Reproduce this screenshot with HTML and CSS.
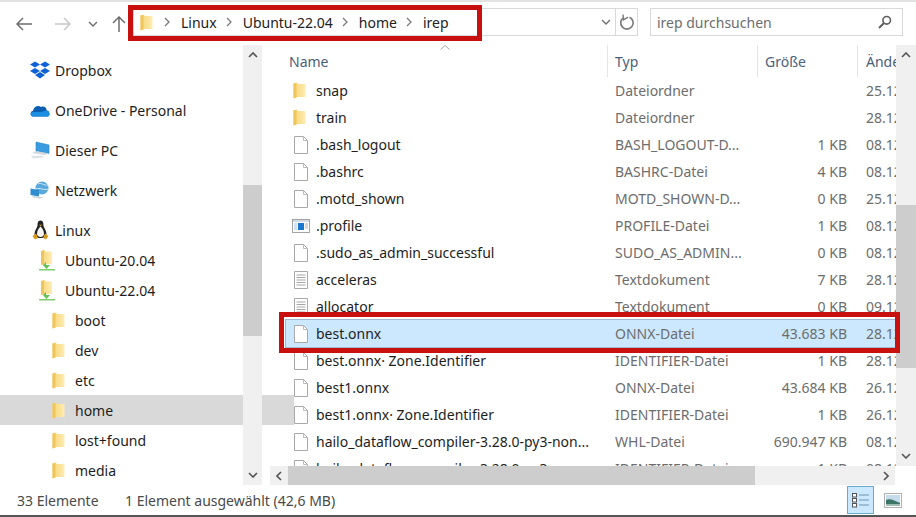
FILE: index.html
```html
<!DOCTYPE html>
<html>
	<head>
		<meta name="viewport" content="width=device-width, initial-scale=1" />
		<title>irep</title>
		<link rel="stylesheet" href="styles.css">
	</head>
	<body>
		<svg class="defs" width="0" height="0">
			<defs>
				<linearGradient id="folderFill" x1="0" y1="0" x2="1" y2="0">
					<stop offset="0" stop-color="#f8d67c" />
					<stop offset="0.6" stop-color="#fbe296" />
					<stop offset="1" stop-color="#fdedb9" />
				</linearGradient>
				<symbol id="folder" viewBox="0 0 14 17">
					<path d="M0.5 1.5 L4.5 0.5 L4.5 2 L12.5 2 L12.5 15 L4.5 15 L0.5 16.5 Z" fill="url(#folderFill)" />
					<path d="M0.5 1.5 L3.5 0.7 L3.5 15.4 L0.5 16.5 Z" fill="#efc65c" />
				</symbol>
				<symbol id="file" viewBox="0 0 16 20">
					<path d="M1.5 1.5 H10.5 L14.5 5.5 V18.5 H1.5 Z" fill="#fff" stroke="#a9a9a9" />
					<path d="M10.5 1.5 V5.5 H14.5" fill="none" stroke="#bdbdbd" />
				</symbol>
				<symbol id="textfile" viewBox="0 0 16 20">
					<path d="M1.5 1.5 H14.5 V18.5 H1.5 Z" fill="#fff" stroke="#a9a9a9" />
					<path d="M3.5 5 H12.5 M3.5 7.5 H12.5 M3.5 10 H12.5 M3.5 12.5 H12.5 M3.5 15 H12.5" stroke="#a5a5a5" />
				</symbol>
				<symbol id="profile" viewBox="0 0 18 14">
					<rect x="0.5" y="0.5" width="17" height="13" fill="#fff" stroke="#a4a4a4" />
					<rect x="1" y="1" width="16" height="2" fill="#cfd8e3" />
					<rect x="2" y="4" width="3" height="7" fill="#cfe2f5" />
					<rect x="6" y="4" width="6" height="7" fill="#1b76cf" />
					<path d="M13 5 H16 M13 7 H16 M13 9 H16" stroke="#b0b0b0" />
				</symbol>
				<symbol id="wslfolder" viewBox="0 0 18 22">
					<path d="M3 2 L7 1 L7 2.5 L14 2.5 L14 15 L7 15 L3 16 Z" fill="url(#folderFill)" />
					<path d="M3 2 L6 1.2 L6 15.3 L3 16 Z" fill="#efc65c" />
					<path d="M8 13 V16 H12 L8.5 20 L5 16 Z" fill="#62c04e" />
					<path d="M1 20 H17 V21.5 H1 Z" fill="#7fce6b" />
				</symbol>
			</defs>
		</svg>

		<div class="window">
			<header class="toolbar">
				<button class="navButton">
					<svg width="16" height="14" viewBox="0 0 16 14"><path d="M7 1 L1 7 L7 13 M1 7 H16" fill="none" stroke="#6e6e6e" stroke-width="1.5" /></svg>
				</button>
				<button class="navButton navForward">
					<svg width="16" height="14" viewBox="0 0 16 14"><path d="M9 1 L15 7 L9 13 M0 7 H15" fill="none" stroke="#c8c8c8" stroke-width="1.5" /></svg>
				</button>
				<button class="navButton navRecent">
					<svg width="10" height="6" viewBox="0 0 10 6"><path d="M1 1 L5 5 L9 1" fill="none" stroke="#6e6e6e" stroke-width="1.4" /></svg>
				</button>
				<button class="navButton navUp">
					<svg width="14" height="16" viewBox="0 0 14 16"><path d="M1 7 L7 1 L13 7 M7 1 V16" fill="none" stroke="#6e6e6e" stroke-width="1.5" /></svg>
				</button>

				<div class="addressBar">
					<svg class="addressFolder" width="14" height="17"><use href="#folder" /></svg>
					<div class="crumbs">
						<svg class="crumbArrow" width="6" height="10" viewBox="0 0 6 10"><path d="M1 1 L5 5 L1 9" fill="none" stroke="#7a7a7a" stroke-width="1.3" /></svg>
						<span>Linux</span>
						<svg class="crumbArrow" width="6" height="10" viewBox="0 0 6 10"><path d="M1 1 L5 5 L1 9" fill="none" stroke="#7a7a7a" stroke-width="1.3" /></svg>
						<span>Ubuntu-22.04</span>
						<svg class="crumbArrow" width="6" height="10" viewBox="0 0 6 10"><path d="M1 1 L5 5 L1 9" fill="none" stroke="#7a7a7a" stroke-width="1.3" /></svg>
						<span>home</span>
						<svg class="crumbArrow" width="6" height="10" viewBox="0 0 6 10"><path d="M1 1 L5 5 L1 9" fill="none" stroke="#7a7a7a" stroke-width="1.3" /></svg>
						<span>irep</span>
					</div>
					<div class="addressDrop">
						<svg width="10" height="6" viewBox="0 0 10 6"><path d="M1 1 L5 5 L9 1" fill="none" stroke="#6e6e6e" stroke-width="1.4" /></svg>
					</div>
					<div class="addressRefresh">
						<svg width="16" height="17" viewBox="0 0 16 17"><path d="M10.5 3.2 A6.2 6.2 0 1 1 5 3.4" fill="none" stroke="#7d7d7d" stroke-width="1.7" /><path d="M4 0.5 L4.6 5.8 L9 3.2" fill="none" stroke="#7d7d7d" stroke-width="1.4" /></svg>
					</div>
				</div>

				<div class="searchBox">
					<span>irep durchsuchen</span>
					<svg width="14" height="14" viewBox="0 0 14 14"><circle cx="8.7" cy="5.3" r="3.8" fill="none" stroke="#5f5f5f" stroke-width="1.6" /><path d="M6 8 L1 13" stroke="#5f5f5f" stroke-width="2" /></svg>
				</div>
			</header>

			<main class="content">
				<nav class="tree">
					<div class="treeList">
						<div class="treeItem treeTop">
							<svg class="treeIcon" width="20" height="18" viewBox="0 0 20 18"><path d="M5 0.5 L10 3.5 L5 6.5 L0 3.5 Z M15 0.5 L20 3.5 L15 6.5 L10 3.5 Z M5 7 L10 10 L5 13 L0 10 Z M15 7 L20 10 L15 13 L10 10 Z M10 11 L15 14 L10 17.5 L5 14 Z" fill="#0f62d6" /></svg>
							<span>Dropbox</span>
						</div>
						<div class="treeItem treeTop">
							<svg class="treeIcon" width="20" height="14" viewBox="0 0 20 14"><path d="M3.5 13.5 C0 13.5 -0.5 8.5 3 7.8 C3.8 3.5 8 1.5 11 4 C14 2.5 17 5 16.5 7.5 C20 7.5 20.8 13.5 17 13.5 Z" fill="#0c5fb0" /><path d="M3.5 13.5 C0 13.5 -0.5 9.5 3 9 L11 9 L16.5 7.5 C20 7.5 20.8 13.5 17 13.5 Z" fill="#1c8fe3" /></svg>
							<span>OneDrive - Personal</span>
						</div>
						<div class="treeItem treeTop">
							<svg class="treeIcon" width="20" height="18" viewBox="0 0 20 18"><path d="M6 1 L19 4 V12.5 L6 10 Z" fill="#3a9ce0" stroke="#2a7fc0" stroke-width="0.6" /><path d="M6 10 L19 12.5 L15 14 L2 12 Z" fill="#cfd6dc" /><path d="M1 15 L12 14.5 L14 16.5 L3 17.5 Z" fill="#dfe3e6" /></svg>
							<span>Dieser PC</span>
						</div>
						<div class="treeItem treeTop">
							<svg class="treeIcon" width="20" height="18" viewBox="0 0 20 18"><circle cx="12" cy="7" r="6.5" fill="#58a9dd" /><path d="M8 3 C11 1 14 5 18 4 M6 8 C10 6 14 10 18 8" fill="none" stroke="#cfe9f8" stroke-width="1" /><path d="M0.5 7.5 L9 9 V15.5 L0.5 14 Z" fill="#2f8dd0" /><path d="M4 15 L14 16.5 L10 17.5 L1 16 Z" fill="#c9d2d8" /></svg>
							<span>Netzwerk</span>
						</div>
						<div class="treeItem treeTop treeLinux">
							<svg class="treeIcon treeTux" width="17" height="20" viewBox="0 0 17 20"><path d="M8.5 0.5 C5.5 0.5 5.5 4 5.5 6 C5 8 2.5 10.5 2.5 14 C2.5 16 5 18 8.5 18 C12 18 14.5 16 14.5 14 C14.5 10.5 12 8 11.5 6 C11.5 4 11.5 0.5 8.5 0.5 Z" fill="#222" /><path d="M8.5 6.5 C6.5 8 5 11 5 14 C5 16 7 17 8.5 17 C10 17 12 16 12 14 C12 11 10.5 8 8.5 6.5 Z" fill="#f5f5f5" /><path d="M7 4.7 H10 L8.5 6.2 Z" fill="#e0a526" /><path d="M0.5 16 L4 13.5 L6 18 L3 19.5 Z M16.5 16 L13 13.5 L11 18 L14 19.5 Z" fill="#d99a1c" /></svg>
							<span>Linux</span>
						</div>
						<div class="treeItem treeDistro">
							<svg class="treeIcon" width="18" height="22"><use href="#wslfolder" /></svg>
							<span>Ubuntu-20.04</span>
						</div>
						<div class="treeItem treeDistro">
							<svg class="treeIcon" width="18" height="22"><use href="#wslfolder" /></svg>
							<span>Ubuntu-22.04</span>
						</div>
						<div class="treeItem treeDir">
							<svg class="treeIcon" width="14" height="17"><use href="#folder" /></svg>
							<span>boot</span>
						</div>
						<div class="treeItem treeDir">
							<svg class="treeIcon" width="14" height="17"><use href="#folder" /></svg>
							<span>dev</span>
						</div>
						<div class="treeItem treeDir">
							<svg class="treeIcon" width="14" height="17"><use href="#folder" /></svg>
							<span>etc</span>
						</div>
						<div class="treeItem treeDir treeSelected">
							<svg class="treeIcon" width="14" height="17"><use href="#folder" /></svg>
							<span>home</span>
						</div>
						<div class="treeItem treeDir">
							<svg class="treeIcon" width="14" height="17"><use href="#folder" /></svg>
							<span>lost+found</span>
						</div>
						<div class="treeItem treeDir">
							<svg class="treeIcon" width="14" height="17"><use href="#folder" /></svg>
							<span>media</span>
						</div>
					</div>
					<div class="scrollV treeScroll">
						<svg class="scrollEnd" width="10" height="6" viewBox="0 0 10 6"><path d="M1 5 L5 1 L9 5" fill="none" stroke="#555" stroke-width="1.6" /></svg>
						<div class="scrollTrack"><div class="scrollThumb"></div></div>
						<svg class="scrollEnd" width="10" height="6" viewBox="0 0 10 6"><path d="M1 1 L5 5 L9 1" fill="none" stroke="#555" stroke-width="1.6" /></svg>
					</div>
				</nav>

				<section class="files">
					<div class="filesMain">
						<div class="filesView">
							<div class="columnHeads">
								<div class="head headName">Name
									<svg class="sortCaret" width="10" height="5" viewBox="0 0 10 5"><path d="M0.5 4.5 L5 0.5 L9.5 4.5" fill="none" stroke="#a8a8a8" /></svg>
								</div>
								<div class="head">Typ</div>
								<div class="head">Größe</div>
								<div class="head headDate">Änderungsdatum</div>
							</div>
							<div class="rows">
								<div class="row"><svg class="rowIcon" width="14" height="17"><use href="#folder" /></svg><span class="name">snap</span><span class="type">Dateiordner</span><span class="size"></span><span class="date">25.12.</span></div>
								<div class="row"><svg class="rowIcon" width="14" height="17"><use href="#folder" /></svg><span class="name">train</span><span class="type">Dateiordner</span><span class="size"></span><span class="date">28.12.</span></div>
								<div class="row"><svg class="rowIcon" width="16" height="20"><use href="#file" /></svg><span class="name">.bash_logout</span><span class="type">BASH_LOGOUT-D...</span><span class="size">1 KB</span><span class="date">08.12.</span></div>
								<div class="row"><svg class="rowIcon" width="16" height="20"><use href="#file" /></svg><span class="name">.bashrc</span><span class="type">BASHRC-Datei</span><span class="size">4 KB</span><span class="date">08.12.</span></div>
								<div class="row"><svg class="rowIcon" width="16" height="20"><use href="#file" /></svg><span class="name">.motd_shown</span><span class="type">MOTD_SHOWN-D...</span><span class="size">0 KB</span><span class="date">25.12.</span></div>
								<div class="row"><svg class="rowIcon rowIconWide" width="18" height="14"><use href="#profile" /></svg><span class="name">.profile</span><span class="type">PROFILE-Datei</span><span class="size">1 KB</span><span class="date">08.12.</span></div>
								<div class="row"><svg class="rowIcon" width="16" height="20"><use href="#file" /></svg><span class="name">.sudo_as_admin_successful</span><span class="type">SUDO_AS_ADMIN...</span><span class="size">0 KB</span><span class="date">08.12.</span></div>
								<div class="row"><svg class="rowIcon" width="16" height="20"><use href="#textfile" /></svg><span class="name">acceleras</span><span class="type">Textdokument</span><span class="size">7 KB</span><span class="date">28.12.</span></div>
								<div class="row"><svg class="rowIcon" width="16" height="20"><use href="#textfile" /></svg><span class="name">allocator</span><span class="type">Textdokument</span><span class="size">0 KB</span><span class="date">09.12.</span></div>
								<div class="row rowSelected"><svg class="rowIcon" width="16" height="20"><use href="#file" /></svg><span class="name">best.onnx</span><span class="type">ONNX-Datei</span><span class="size">43.683 KB</span><span class="date">28.12.</span></div>
								<div class="row"><svg class="rowIcon" width="16" height="20"><use href="#file" /></svg><span class="name">best.onnx· Zone.Identifier</span><span class="type">IDENTIFIER-Datei</span><span class="size">1 KB</span><span class="date">28.12.</span></div>
								<div class="row"><svg class="rowIcon" width="16" height="20"><use href="#file" /></svg><span class="name">best1.onnx</span><span class="type">ONNX-Datei</span><span class="size">43.684 KB</span><span class="date">26.12.</span></div>
								<div class="row"><svg class="rowIcon" width="16" height="20"><use href="#file" /></svg><span class="name">best1.onnx· Zone.Identifier</span><span class="type">IDENTIFIER-Datei</span><span class="size">1 KB</span><span class="date">26.12.</span></div>
								<div class="row"><svg class="rowIcon" width="16" height="20"><use href="#file" /></svg><span class="name">hailo_dataflow_compiler-3.28.0-py3-non...</span><span class="type">WHL-Datei</span><span class="size">690.947 KB</span><span class="date">08.12.</span></div>
								<div class="row"><svg class="rowIcon" width="16" height="20"><use href="#file" /></svg><span class="name">hailo_dataflow_compiler-3.28.0-py3...</span><span class="type">IDENTIFIER-Datei</span><span class="size">1 KB</span><span class="date">08.12.</span></div>
							</div>
						</div>
						<div class="scrollV filesScroll">
							<svg class="scrollEnd" width="10" height="6" viewBox="0 0 10 6"><path d="M1 5 L5 1 L9 5" fill="none" stroke="#555" stroke-width="1.6" /></svg>
							<div class="scrollTrack"><div class="scrollThumb"></div></div>
							<svg class="scrollEnd" width="10" height="6" viewBox="0 0 10 6"><path d="M1 1 L5 5 L9 1" fill="none" stroke="#555" stroke-width="1.6" /></svg>
						</div>
					</div>
					<div class="scrollH">
						<svg class="scrollEnd" width="6" height="10" viewBox="0 0 6 10"><path d="M5 1 L1 5 L5 9" fill="none" stroke="#555" stroke-width="1.6" /></svg>
						<div class="scrollTrackH"><div class="scrollThumbH"></div></div>
						<svg class="scrollEnd" width="6" height="10" viewBox="0 0 6 10"><path d="M1 1 L5 5 L1 9" fill="none" stroke="#555" stroke-width="1.6" /></svg>
					</div>
				</section>
			</main>

			<footer class="statusBar">
				<span class="statusCount">33 Elemente</span>
				<span class="statusSelected">1 Element ausgewählt (42,6 MB)</span>
				<div class="viewButtons">
					<div class="viewButton viewActive">
						<svg width="17" height="17" viewBox="0 0 17 17"><rect x="0.5" y="1.5" width="4" height="3.5" fill="#fff" stroke="#555" /><rect x="0.5" y="6.5" width="4" height="3.5" fill="#fff" stroke="#555" /><rect x="0.5" y="11.5" width="4" height="3.5" fill="#fff" stroke="#555" /><path d="M7 3 H17 M7 8 H17 M7 13 H17" stroke="#6f93ad" /></svg>
					</div>
					<div class="viewButton">
						<svg width="18" height="15" viewBox="0 0 18 15"><rect x="0.5" y="0.5" width="17" height="14" fill="#fff" stroke="#b0b0b0" /><rect x="2" y="2" width="14" height="11" fill="#c6dcec" /><path d="M2 7 C6 5 11 8 16 10 V13 H2 Z" fill="#3a7565" /><rect x="2" y="11" width="14" height="2" fill="#9dbbb1" /></svg>
					</div>
				</div>
			</footer>

			<div class="marker markerAddress"></div>
			<div class="marker markerRow"></div>
		</div>
	</body>
</html>
```

FILE: styles.css
```css
html {
	font-family: "Noto Sans", Arial, sans-serif;
	font-size: 14px;
}
body {
	margin: 0px;
	background: white;
	color: #1e1e1e;
}
.defs {
	position: absolute;
}
.window {
	position: relative;
	width: 916px;
	height: 517px;
	display: flex;
	flex-direction: column;
	overflow: hidden;
	border-top: 2px solid #e3e3e3;
	box-sizing: border-box;
}

/* top bar */
.toolbar {
	height: 43px;
	flex: none;
	display: flex;
	align-items: center;
}
.navButton {
	border: none;
	background: none;
	padding: 0px;
	display: flex;
	align-items: center;
	justify-content: center;
	margin-left: 16px;
	width: 16px;
}
.navForward {
	margin-left: 23px;
}
.navRecent {
	margin-left: 17px;
	width: 10px;
}
.navUp {
	margin-left: 14px;
	width: 14px;
}
.addressBar {
	margin-left: 7px;
	width: 505px;
	height: 28px;
	display: flex;
	align-items: center;
	box-sizing: border-box;
	border: 1px solid #d9d9d9;
	margin-top: -3px;
}
.addressFolder {
	margin-left: 6px;
	flex: none;
}
.crumbs {
	display: flex;
	align-items: center;
	flex: 1;
	margin-left: 10px;
}
.crumbs span {
	margin: 0px 9px 0px 11px;
	color: #222;
}
.addressDrop {
	width: 20px;
	height: 100%;
	display: flex;
	align-items: center;
	justify-content: center;
	border-right: 1px solid #d9d9d9;
	box-sizing: border-box;
}
.addressRefresh {
	width: 21px;
	display: flex;
	justify-content: center;
}
.searchBox {
	margin-left: 12px;
	margin-top: -3px;
	width: 253px;
	height: 28px;
	box-sizing: border-box;
	border: 1px solid #d9d9d9;
	display: flex;
	align-items: center;
	justify-content: space-between;
	padding: 0px 10px 0px 6px;
	color: #6d6d6d;
}

/* middle */
.content {
	height: 440px;
	flex: none;
	display: flex;
}
.tree {
	width: 270px;
	flex: none;
	display: flex;
}
.treeList {
	width: 243px;
	flex: none;
	padding-top: 5px;
}
.treeItem {
	display: flex;
	align-items: center;
	height: 30px;
}
.treeTop {
	height: 40px;
	padding-left: 30px;
}
.treeLinux {
	height: 30px;
	margin-top: 5px;
}
.treeDistro {
	padding-left: 38px;
}
.treeDir {
	padding-left: 52px;
}
.treeIcon {
	flex: none;
	margin-right: 5px;
}
.treeTux {
	margin-left: 2px;
	margin-right: 6px;
}
.treeDistro .treeIcon {
	margin-right: 9px;
}
.treeDir .treeIcon {
	margin-right: 9px;
}
.treeSelected {
	background: #d9d9d9;
	width: 242px;
}
.scrollV {
	width: 19px;
	flex: none;
	background: #f0f0f0;
	display: flex;
	flex-direction: column;
	align-items: center;
}
.scrollEnd {
	flex: none;
	margin: 7px 0px;
}
.scrollTrack {
	flex: 1;
	width: 100%;
}
.scrollThumb {
	background: #cdcdcd;
}
.treeScroll .scrollThumb {
	margin-top: 120px;
	height: 151px;
}
.filesScroll {
	width: 20px;
}
.filesScroll .scrollThumb {
	margin-top: 140px;
	height: 163px;
}
.files {
	width: 646px;
	display: flex;
	flex-direction: column;
}
.filesMain {
	display: flex;
	height: 421px;
}
.filesView {
	width: 626px;
	flex: none;
	overflow: hidden;
}
.columnHeads {
	display: grid;
	grid-template-columns: 337px 150px 100px 39px;
	height: 32px;
	color: #4c607a;
}
.head {
	position: relative;
	padding-left: 7px;
	border-left: 1px solid #e5e5e5;
	line-height: 34px;
	box-sizing: border-box;
	white-space: nowrap;
	overflow: hidden;
}
.headName {
	border-left: none;
	padding-left: 19px;
}
.headDate {
	padding-left: 8px;
}
.sortCaret {
	position: absolute;
	left: 170px;
	top: 0px;
}
.rows {
	height: 389px;
}
.row {
	display: grid;
	grid-template-columns: 23px 299px 150px 82px 49px;
	align-items: center;
	height: 27px;
	margin-left: 16px;
	box-sizing: border-box;
	padding-left: 7px;
	width: 610px;
	white-space: nowrap;
}
.rowSelected {
	background: #cce8ff;
	outline: 1px solid #a3b9cf;
}
.rowIconWide {
	margin-left: -1px;
}
.name {
	color: #1e1e1e;
}
.type,
.date {
	color: #6d6d6d;
}
.size {
	color: #6d6d6d;
	text-align: right;
}
.date {
	padding-left: 19px;
	overflow: hidden;
}
.scrollH {
	height: 19px;
	width: 625px;
	display: flex;
	align-items: center;
	background: #f0f0f0;
}
.scrollH .scrollEnd {
	margin: 0px 6px;
}
.scrollTrackH {
	flex: 1;
	height: 100%;
}
.scrollThumbH {
	height: 100%;
	width: 467px;
	background: #cdcdcd;
}

/* bottom */
.statusBar {
	flex: 1;
	display: flex;
	align-items: center;
	color: #4a4a4a;
	border-bottom: 2px solid #555;
	padding-left: 17px;
}
.statusCount {
	width: 108px;
	flex: none;
}
.viewButtons {
	margin-left: auto;
	margin-right: 10px;
	display: flex;
	align-items: center;
	gap: 5px;
}
.viewButton {
	width: 27px;
	height: 28px;
	display: flex;
	align-items: center;
	justify-content: center;
	box-sizing: border-box;
}
.viewActive {
	background: #cce8ff;
	border: 1px solid #6fa9c8;
}

/* red boxes drawn over the shot */
.marker {
	position: absolute;
	border: 5px solid #c8100f;
	box-sizing: border-box;
}
.markerAddress {
	left: 128px;
	top: 3px;
	width: 354px;
	height: 36px;
}
.markerRow {
	left: 279px;
	top: 310px;
	width: 621px;
	height: 41px;
}
```
